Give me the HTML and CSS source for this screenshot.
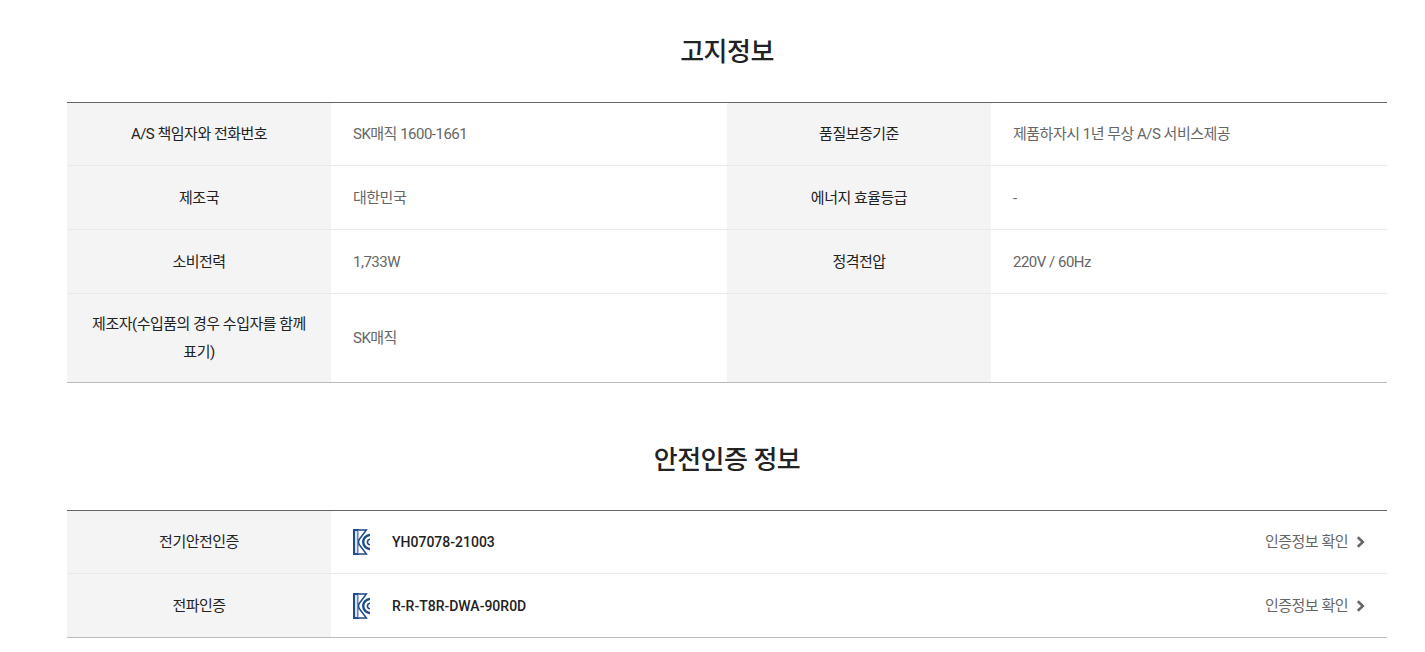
FILE: index.html
```html
<!DOCTYPE html>
<html lang="ko">
<head>
<meta charset="utf-8">
<title>고지정보</title>
<link rel="stylesheet" href="styles.css">
</head>
<body>
<main class="page">
  <section class="block first">
    <h2 class="title">고지정보</h2>
    <table class="info">
      <colgroup><col class="c-th"><col class="c-td"><col class="c-th"><col class="c-td"></colgroup>
      <tbody>
        <tr class="row"><th>A/S 책임자와 전화번호</th><td>SK매직 1600-1661</td><th>품질보증기준</th><td>제품하자시 1년 무상 A/S 서비스제공</td></tr>
        <tr class="row"><th>제조국</th><td>대한민국</td><th>에너지 효율등급</th><td>-</td></tr>
        <tr class="row"><th>소비전력</th><td>1,733W</td><th>정격전압</th><td>220V / 60Hz</td></tr>
        <tr class="row tall"><th>제조자(수입품의 경우 수입자를 함께 표기)</th><td>SK매직</td><th></th><td></td></tr>
      </tbody>
    </table>
  </section>
  <section class="block second">
    <h2 class="title">안전인증 정보</h2>
    <table class="info">
      <colgroup><col class="c-th"><col></colgroup>
      <tbody>
        <tr class="row">
          <th>전기안전인증</th>
          <td>
            <div class="cert">
              <svg class="kc" viewBox="0 0 17 26" aria-hidden="true"><path d="M1 1h4.4v24H1z" fill="#dbe5f1" stroke="#1f4b8e" stroke-width="2"/><path d="M5.4 1h8L5.4 11.5M5.4 25h8L5.4 14.5" fill="#fff" stroke="#1f4b8e" stroke-width="1.5"/><path d="M17 6a7.2 7.2 0 0 0-6.8 7 7.2 7.2 0 0 0 6.8 7" fill="#fff" stroke="#1f4b8e" stroke-width="2.4"/><path d="M17 10.2a3 3 0 0 0-2.6 2.8 3 3 0 0 0 2.6 2.8" fill="none" stroke="#1f4b8e" stroke-width="1.6"/></svg>
              <span class="code">YH07078-21003</span>
              <a class="link" href="#">인증정보 확인<svg class="chev" viewBox="0 0 10 12" aria-hidden="true"><path d="M1.8 1.2 6.8 6l-5 4.8" fill="none" stroke="#666" stroke-width="2.6"/></svg></a>
            </div>
          </td>
        </tr>
        <tr class="row">
          <th>전파인증</th>
          <td>
            <div class="cert">
              <svg class="kc" viewBox="0 0 17 26" aria-hidden="true"><path d="M1 1h4.4v24H1z" fill="#dbe5f1" stroke="#1f4b8e" stroke-width="2"/><path d="M5.4 1h8L5.4 11.5M5.4 25h8L5.4 14.5" fill="#fff" stroke="#1f4b8e" stroke-width="1.5"/><path d="M17 6a7.2 7.2 0 0 0-6.8 7 7.2 7.2 0 0 0 6.8 7" fill="#fff" stroke="#1f4b8e" stroke-width="2.4"/><path d="M17 10.2a3 3 0 0 0-2.6 2.8 3 3 0 0 0 2.6 2.8" fill="none" stroke="#1f4b8e" stroke-width="1.6"/></svg>
              <span class="code">R-R-T8R-DWA-90R0D</span>
              <a class="link" href="#">인증정보 확인<svg class="chev" viewBox="0 0 10 12" aria-hidden="true"><path d="M1.8 1.2 6.8 6l-5 4.8" fill="none" stroke="#666" stroke-width="2.6"/></svg></a>
            </div>
          </td>
        </tr>
      </tbody>
    </table>
  </section>
</main>
</body>
</html>
```
FILE: styles.css
```css
* { box-sizing: border-box; }
html, body { margin: 0; padding: 0; background: #fff; }
body {
  font-family: Roboto, "Noto Sans CJK KR", sans-serif;
  font-size: 15px;
  color: #222;
  overflow: hidden;
  height: 652px;
}
.page { width: 1320px; margin-left: 67px; padding-top: 32px; }
.block.second { margin-top: 57px; }
.title {
  margin: 0 0 30px;
  font-size: 26px;
  line-height: 40px;
  font-weight: 500;
  text-align: center;
  color: #222;
  letter-spacing: -0.5px;
}
.info {
  width: 100%;
  table-layout: fixed;
  border-collapse: collapse;
  border-top: 1px solid #666;
  border-bottom: 1px solid #bbb;
}
.c-th { width: 264px; }
.c-td { width: 396px; }
.row th, .row td {
  height: 64px;
  border-bottom: 1px solid #e9e9e9;
  font-size: 15px;
  line-height: 28px;
  letter-spacing: -0.5px;
  padding: 0 22px;
  vertical-align: middle;
  word-break: keep-all;
}
.row:first-child th, .row:first-child td { height: 63px; }
.row:last-child th, .row:last-child td { border-bottom: 1px solid #bbb; }
.row.tall th, .row.tall td { height: 89px; }
.row th { background: #f4f4f4; font-weight: 400; color: #222; text-align: center; }
.row td { color: #666; text-align: left; }
.cert { display: flex; align-items: center; }
.kc { width: 17px; height: 26px; margin-right: 22px; flex: none; }
.code { font-size: 14px; letter-spacing: 0; font-weight: 500; color: #222; }
.link { margin-left: auto; display: flex; align-items: center; color: #666; text-decoration: none; }
.chev { width: 10px; height: 12px; margin-left: 8px; margin-right: -1px; }
```
